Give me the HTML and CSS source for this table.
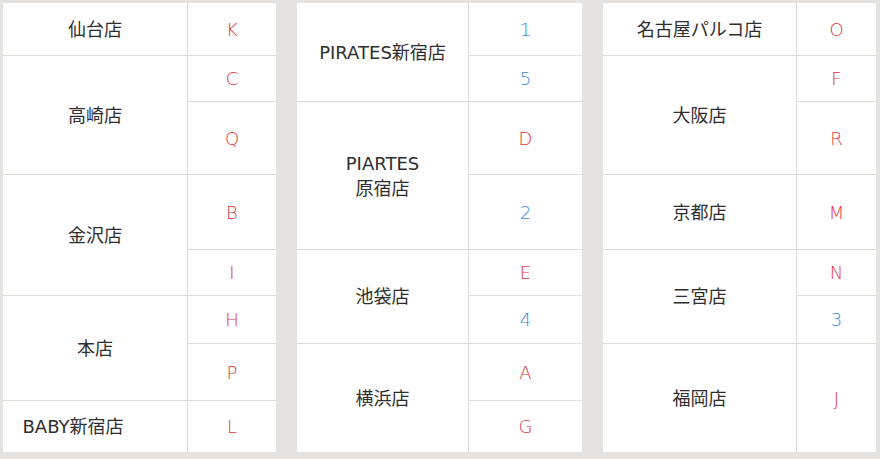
FILE: index.html
```
<!DOCTYPE html>
<html lang="ja">
<head>
<meta charset="utf-8">
<link rel="stylesheet" href="styles.css">
</head>
<body>
<div class="wrap">
  <div class="shop-table t1">
    <div class="name r1">仙台店</div><div class="code red">K</div>
    <div class="name r2">高崎店</div><div class="code red">C</div>
    <div class="code red">Q</div>
    <div class="name r2">金沢店</div><div class="code red">B</div>
    <div class="code red">I</div>
    <div class="name r2">本店</div><div class="code red">H</div>
    <div class="code red">P</div>
    <div class="name r1 offset">BABY新宿店</div><div class="code red">L</div>
  </div>
  <div class="shop-table t2">
    <div class="name r2">PIRATES新宿店</div><div class="code blue">1</div>
    <div class="code blue">5</div>
    <div class="name r2">PIARTES<br>原宿店</div><div class="code red">D</div>
    <div class="code blue">2</div>
    <div class="name r2">池袋店</div><div class="code red">E</div>
    <div class="code blue">4</div>
    <div class="name r2">横浜店</div><div class="code red">A</div>
    <div class="code red">G</div>
  </div>
  <div class="shop-table t3">
    <div class="name r1">名古屋パルコ店</div><div class="code red">O</div>
    <div class="name r2">大阪店</div><div class="code red">F</div>
    <div class="code red">R</div>
    <div class="name r1">京都店</div><div class="code red">M</div>
    <div class="name r2">三宮店</div><div class="code red">N</div>
    <div class="code blue">3</div>
    <div class="name r2">福岡店</div><div class="code red r2">J</div>
  </div>
</div>
</body>
</html>
```
FILE: styles.css
```
html, body {
  margin: 0;
  padding: 0;
}
body {
  background: #e6e2df;
  font-family: "DejaVu Sans", "Noto Sans CJK JP", sans-serif;
  font-size: 18px;
  color: #333;
}
.wrap {
  display: flex;
  align-items: flex-start;
  gap: 21px;
  padding: 3px 4px 7px 3px;
}
.shop-table {
  display: grid;
  gap: 1px;
  background: #dedbd8;
  grid-template-rows: 52px 45px 72px 74px 45px 47px 56px 51px;
}
.t1 { grid-template-columns: 184px 88px; }
.t2 { grid-template-columns: 171px 113px; }
.t3 { grid-template-columns: 193px 79px; }
.name, .code {
  background: #fff;
  display: flex;
  align-items: center;
  justify-content: center;
  text-align: center;
  line-height: 25px;
}
.r1 { grid-row: span 1; }
.r2 { grid-row: span 2; }
.name { grid-column: 1; font-weight: 400; color: #2e2e2e; }
.offset { padding-right: 44px; }
.code { grid-column: 2; font-weight: 200; }
.red { color: #e2333a; }
.blue { color: #3489dc; }
```
